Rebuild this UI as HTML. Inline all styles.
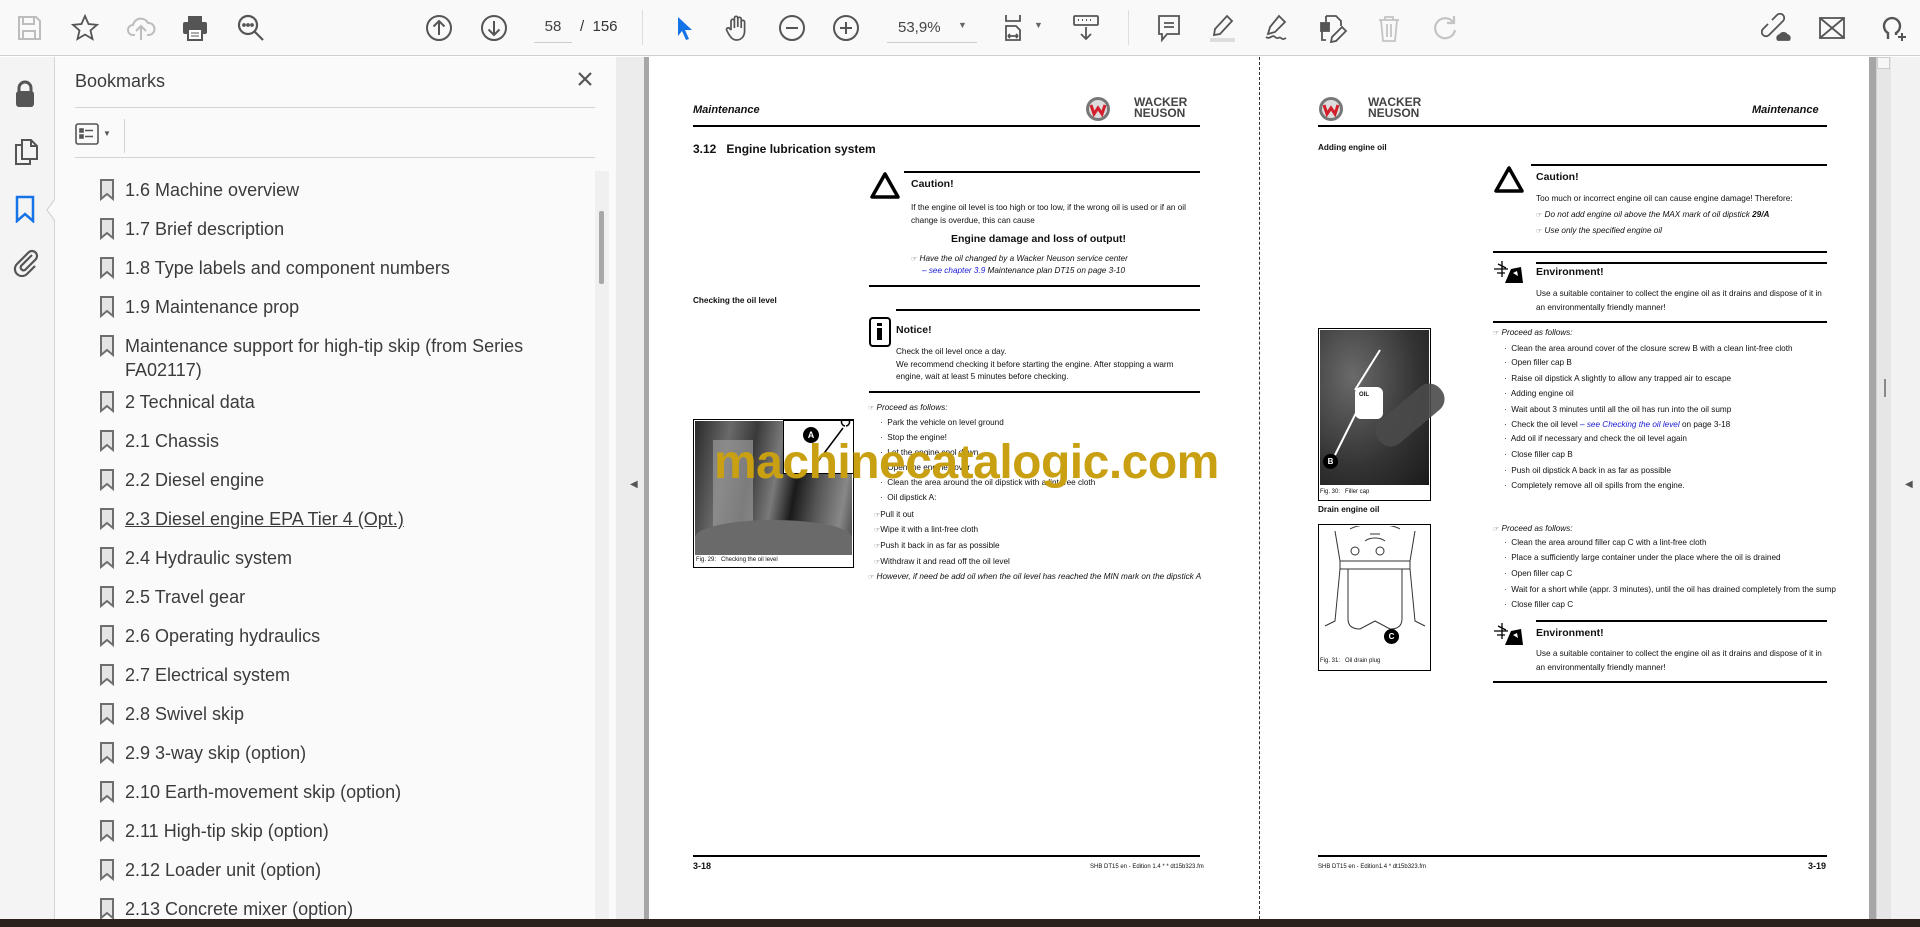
<!DOCTYPE html>
<html><head><meta charset="utf-8"><style>
*{margin:0;padding:0;box-sizing:border-box}
body{width:1920px;height:927px;overflow:hidden;position:relative;background:#fff;font-family:"Liberation Sans",sans-serif}
.a{position:absolute}
.tb{left:0;top:0;width:1920px;height:56px;background:#f9f9f9;border-bottom:1px solid #d0d0d0}
.ic{position:absolute;top:13px;width:30px;height:30px}
.rail{left:0;top:57px;width:55px;height:862px;background:#f4f4f4;border-right:1px solid #d6d6d6}
.bp{left:55px;top:57px;width:561px;height:862px;background:#fafafa}
.bm{position:absolute;left:70px;font-size:18px;color:#3b3b3b;white-space:nowrap;line-height:24px}
.bm svg{position:absolute;left:-26px;top:1px}
.pg{font-family:"Liberation Sans",sans-serif;color:#111;white-space:nowrap;position:absolute;font-size:8.2px;line-height:11px}
.rule{position:absolute;height:2px;background:#000}
.b{font-weight:bold}
.i{font-style:italic}
.hand{font-size:7px;color:#555;font-style:normal}
</style></head><body>
<!-- toolbar -->
<div class="a tb">
<svg class="ic" style="left:14px" viewBox="0 0 30 30" fill="none" stroke="#bdbdbd" stroke-width="2"><path d="M5 4h17l4 4v18H5z"/><path d="M9 4v7h11V4M9 26v-8h12v8"/></svg>
<svg class="ic" style="left:70px" viewBox="0 0 30 30" fill="none" stroke="#555" stroke-width="1.8"><path d="M15 3l3.5 8 8.5.8-6.5 5.7 2 8.5L15 21.5 7.5 26l2-8.5L3 11.8l8.5-.8z"/></svg>
<svg class="ic" style="left:126px" viewBox="0 0 30 30" fill="none" stroke="#bdbdbd" stroke-width="2"><path d="M9 22H7a5 5 0 0 1 0-10 8 8 0 0 1 15-2 6 6 0 0 1 1 12h-2M15 27V14M10 18l5-5 5 5"/></svg>
<svg class="ic" style="left:180px" viewBox="0 0 30 30"><rect x="8" y="3" width="14" height="6" fill="#555"/><rect x="3" y="9" width="24" height="12" rx="2" fill="#555"/><rect x="8" y="16" width="14" height="11" fill="#fff" stroke="#555" stroke-width="2"/><path d="M11 20h8M11 23h8" stroke="#555"/></svg>
<svg class="ic" style="left:236px" viewBox="0 0 30 30" fill="none" stroke="#555" stroke-width="2.2"><circle cx="12" cy="12" r="9"/><path d="M18.5 18.5L27 27"/><circle cx="8" cy="12" r=".8" fill="#555"/><circle cx="12" cy="12" r=".8" fill="#555"/><circle cx="16" cy="12" r=".8" fill="#555"/></svg>
<svg class="ic" style="left:424px" viewBox="0 0 30 30" fill="none" stroke="#555" stroke-width="2"><circle cx="15" cy="15" r="12"/><path d="M15 22V8M9.5 13.5L15 8l5.5 5.5"/></svg>
<svg class="ic" style="left:479px" viewBox="0 0 30 30" fill="none" stroke="#555" stroke-width="2"><circle cx="15" cy="15" r="12"/><path d="M15 8v14M9.5 16.5L15 22l5.5-5.5"/></svg>
<div class="a" style="left:534px;top:18px;width:38px;text-align:center;font-size:15px;color:#444">58</div>
<div class="a" style="left:534px;top:42px;width:38px;height:1px;background:#ccc"></div>
<div class="a" style="left:580px;top:18px;font-size:15px;color:#333">/&nbsp; 156</div>
<div class="a" style="left:642px;top:10px;width:1px;height:35px;background:#ddd"></div>
<svg class="ic" style="left:670px" viewBox="0 0 30 30"><path d="M8 4l14 13h-7l4 9-3 1-4-9-4 5z" fill="#1473e6"/></svg>
<svg class="ic" style="left:722px" viewBox="0 0 30 30" fill="none" stroke="#555" stroke-width="1.7"><path d="M9 17V8a1.7 1.7 0 0 1 3.4 0v7M12.4 14V5a1.7 1.7 0 0 1 3.4 0v9M15.8 14V6a1.7 1.7 0 0 1 3.4 0v9M19.2 15V9a1.7 1.7 0 0 1 3.4 0v9c0 5-3 9-8 9-4 0-6-3-8-6l-2-4a1.7 1.7 0 0 1 3-1.5L9 17"/></svg>
<svg class="ic" style="left:777px" viewBox="0 0 30 30" fill="none" stroke="#555" stroke-width="2"><circle cx="15" cy="15" r="12"/><path d="M9 15h12"/></svg>
<svg class="ic" style="left:831px" viewBox="0 0 30 30" fill="none" stroke="#555" stroke-width="2"><circle cx="15" cy="15" r="12"/><path d="M9 15h12M15 9v12"/></svg>
<div class="a" style="left:898px;top:19px;font-size:15px;color:#444">53,9%</div>
<div class="a" style="left:887px;top:42px;width:90px;height:1px;background:#ccc"></div>
<div class="a" style="left:958px;top:20px;font-size:9px;color:#666">▼</div>
<svg class="ic" style="left:1002px" viewBox="0 0 30 30" fill="none" stroke="#555" stroke-width="1.8"><path d="M4 2v6h14V2M4 27V13h10l4 4v10zM6 23h10M6 23l2-2M6 23l2 2M16 23l-2-2M16 23l-2 2"/></svg>
<div class="a" style="left:1034px;top:20px;font-size:9px;color:#666">▼</div>
<svg class="ic" style="left:1071px" viewBox="0 0 30 30" fill="none" stroke="#555" stroke-width="1.8"><rect x="3" y="3" width="24" height="9" rx="1"/><path d="M7 7h1M11 7h1M15 7h1M19 7h1M23 7h0" stroke-width="2"/><path d="M15 14v12M10 21l5 5 5-5"/></svg>
<div class="a" style="left:1128px;top:10px;width:1px;height:35px;background:#ddd"></div>
<svg class="ic" style="left:1154px" viewBox="0 0 30 30" fill="none" stroke="#555" stroke-width="1.8"><path d="M5 3h20v18H13l-5 6v-6H5z"/><path d="M10 10h10M10 14h10"/></svg>
<svg class="ic" style="left:1207px" viewBox="0 0 30 30" fill="none" stroke="#555" stroke-width="1.8"><path d="M20 3l5 5-12 13-6 1 1-6z"/><rect x="3" y="25" width="25" height="4" fill="#ddd" stroke="none"/></svg>
<svg class="ic" style="left:1261px" viewBox="0 0 30 30" fill="none" stroke="#555" stroke-width="1.8"><path d="M18 3l6 6-10 10-7 2 2-7zM5 24c4 3 6-3 9 0s4-1 6 1 3 1 5 0"/></svg>
<svg class="ic" style="left:1318px" viewBox="0 0 30 30" fill="none" stroke="#555" stroke-width="1.8"><path d="M8 3h10l5 5v5M8 3v6M12 11H4v16h4"/><rect x="3" y="10" width="8" height="8" fill="#555"/><path d="M24 14l4 4-10 10-5 1 1-5z"/></svg>
<svg class="ic" style="left:1374px" viewBox="0 0 30 30" fill="none" stroke="#c4c4c4" stroke-width="1.8"><path d="M5 7h20M11 7V4h8v3M7 7l2 21h12l2-21M13 11v13M17 11v13"/></svg>
<svg class="ic" style="left:1430px" viewBox="0 0 30 30" fill="none" stroke="#c4c4c4" stroke-width="2.2"><path d="M23 9a10 10 0 1 0 2 8M24 3v7h-7"/></svg>
<svg class="ic" style="left:1761px" viewBox="0 0 30 30" fill="none" stroke="#555" stroke-width="1.8"><path d="M13 17l-5 5a4 4 0 0 1-6-6l5-5M17 13l5-5a4 4 0 0 0-6-6l-5 5M11 19l8-8"/><path d="M17 27h11a3 3 0 0 0-2-5 4 4 0 0 0-7 0 3 3 0 0 0-2 5z" fill="#555"/></svg>
<svg class="ic" style="left:1817px" viewBox="0 0 30 30" fill="none" stroke="#555" stroke-width="1.8"><rect x="3" y="5" width="24" height="20"/><path d="M3 5l24 20M27 5L3 25"/></svg>
<svg class="ic" style="left:1878px" viewBox="0 0 30 30" fill="none" stroke="#555" stroke-width="2.4"><path d="M10 26v-6a8 8 0 1 1 8 0v2"/><path d="M20 24h8M24 20v8" stroke-width="2"/></svg>
</div>
<!-- left rail -->
<div class="a rail">
<svg class="a" style="left:13px;top:22px" width="24" height="30" viewBox="0 0 24 30"><path d="M6 13V9a6 6 0 0 1 12 0v4" fill="none" stroke="#555" stroke-width="3"/><rect x="3" y="12" width="18" height="16" rx="3" fill="#555"/></svg>
<svg class="a" style="left:13px;top:80px" width="26" height="30" viewBox="0 0 26 30" fill="none" stroke="#555" stroke-width="2"><path d="M9 3h9l6 6v13H9zM18 3v6h6M9 8H3v19h14v-5"/></svg>
<svg class="a" style="left:14px;top:138px" width="22" height="28" viewBox="0 0 22 28" fill="none" stroke="#1473e6" stroke-width="2.5"><path d="M3 2h16v24l-8-7-8 7z"/></svg>
<svg class="a" style="left:12px;top:190px" width="28" height="30" viewBox="0 0 28 30" fill="none" stroke="#555" stroke-width="2.2"><path d="M20 8L9 19a3 3 0 0 0 4 4l11-11a5 5 0 0 0-7-7L5 17a7 7 0 0 0 10 10l8-8"/></svg>
<svg class="a" style="left:46px;top:142px" width="10" height="22" viewBox="0 0 10 22"><path d="M9 0L1 11l8 11" fill="#fafafa" stroke="#ccc"/></svg>
</div>
<!-- bookmarks panel -->
<div class="a bp">
<div class="a" style="left:20px;top:14px;font-size:18px;color:#3b3b3b">Bookmarks</div>
<svg class="a" style="left:522px;top:14px" width="16" height="16" viewBox="0 0 16 16" stroke="#555" stroke-width="2.2"><path d="M2 2l12 12M14 2L2 14"/></svg>
<div class="a" style="left:20px;top:50px;width:520px;height:1px;background:#d4d4d4"></div>
<svg class="a" style="left:20px;top:66px" width="24" height="22" viewBox="0 0 24 22" fill="none" stroke="#555" stroke-width="1.6"><rect x="1" y="1" width="22" height="20" rx="2"/><rect x="5" y="6" width="3" height="3" fill="#555"/><rect x="5" y="12" width="3" height="3" fill="#555"/><path d="M10 7.5h8M10 13.5h8"/></svg>
<div class="a" style="left:48px;top:72px;font-size:8px;color:#555">▼</div>
<div class="a" style="left:69px;top:62px;width:1px;height:34px;background:#d4d4d4"></div>
<div class="a" style="left:20px;top:100px;width:520px;height:1px;background:#d4d4d4"></div>
<div class="a" style="left:540px;top:114px;width:14px;height:748px;background:#f0f0f0"></div>
<div class="a" style="left:544px;top:154px;width:5px;height:73px;background:#a8a8a8;border-radius:2px"></div>
<div class="bm" style="top:121px"><svg width="16" height="22" viewBox="0 0 16 22"><path d="M2 1h12v19l-6-5-6 5z" fill="#e4e4e4" stroke="#6e6e6e" stroke-width="2"/></svg>1.6 Machine overview</div>
<div class="bm" style="top:160px"><svg width="16" height="22" viewBox="0 0 16 22"><path d="M2 1h12v19l-6-5-6 5z" fill="#e4e4e4" stroke="#6e6e6e" stroke-width="2"/></svg>1.7 Brief description</div>
<div class="bm" style="top:199px"><svg width="16" height="22" viewBox="0 0 16 22"><path d="M2 1h12v19l-6-5-6 5z" fill="#e4e4e4" stroke="#6e6e6e" stroke-width="2"/></svg>1.8 Type labels and component numbers</div>
<div class="bm" style="top:238px"><svg width="16" height="22" viewBox="0 0 16 22"><path d="M2 1h12v19l-6-5-6 5z" fill="#e4e4e4" stroke="#6e6e6e" stroke-width="2"/></svg>1.9 Maintenance prop</div>
<div class="bm" style="top:277px"><svg width="16" height="22" viewBox="0 0 16 22"><path d="M2 1h12v19l-6-5-6 5z" fill="#e4e4e4" stroke="#6e6e6e" stroke-width="2"/></svg>Maintenance support for high-tip skip (from Series<br>FA02117)</div>
<div class="bm" style="top:333px"><svg width="16" height="22" viewBox="0 0 16 22"><path d="M2 1h12v19l-6-5-6 5z" fill="#e4e4e4" stroke="#6e6e6e" stroke-width="2"/></svg>2 Technical data</div>
<div class="bm" style="top:372px"><svg width="16" height="22" viewBox="0 0 16 22"><path d="M2 1h12v19l-6-5-6 5z" fill="#e4e4e4" stroke="#6e6e6e" stroke-width="2"/></svg>2.1 Chassis</div>
<div class="bm" style="top:411px"><svg width="16" height="22" viewBox="0 0 16 22"><path d="M2 1h12v19l-6-5-6 5z" fill="#e4e4e4" stroke="#6e6e6e" stroke-width="2"/></svg>2.2 Diesel engine</div>
<div class="bm" style="top:450px;text-decoration:underline"><svg width="16" height="22" viewBox="0 0 16 22"><path d="M2 1h12v19l-6-5-6 5z" fill="#e4e4e4" stroke="#6e6e6e" stroke-width="2"/></svg>2.3 Diesel engine EPA Tier 4 (Opt.)</div>
<div class="bm" style="top:489px"><svg width="16" height="22" viewBox="0 0 16 22"><path d="M2 1h12v19l-6-5-6 5z" fill="#e4e4e4" stroke="#6e6e6e" stroke-width="2"/></svg>2.4 Hydraulic system</div>
<div class="bm" style="top:528px"><svg width="16" height="22" viewBox="0 0 16 22"><path d="M2 1h12v19l-6-5-6 5z" fill="#e4e4e4" stroke="#6e6e6e" stroke-width="2"/></svg>2.5 Travel gear</div>
<div class="bm" style="top:567px"><svg width="16" height="22" viewBox="0 0 16 22"><path d="M2 1h12v19l-6-5-6 5z" fill="#e4e4e4" stroke="#6e6e6e" stroke-width="2"/></svg>2.6 Operating hydraulics</div>
<div class="bm" style="top:606px"><svg width="16" height="22" viewBox="0 0 16 22"><path d="M2 1h12v19l-6-5-6 5z" fill="#e4e4e4" stroke="#6e6e6e" stroke-width="2"/></svg>2.7 Electrical system</div>
<div class="bm" style="top:645px"><svg width="16" height="22" viewBox="0 0 16 22"><path d="M2 1h12v19l-6-5-6 5z" fill="#e4e4e4" stroke="#6e6e6e" stroke-width="2"/></svg>2.8 Swivel skip</div>
<div class="bm" style="top:684px"><svg width="16" height="22" viewBox="0 0 16 22"><path d="M2 1h12v19l-6-5-6 5z" fill="#e4e4e4" stroke="#6e6e6e" stroke-width="2"/></svg>2.9 3-way skip (option)</div>
<div class="bm" style="top:723px"><svg width="16" height="22" viewBox="0 0 16 22"><path d="M2 1h12v19l-6-5-6 5z" fill="#e4e4e4" stroke="#6e6e6e" stroke-width="2"/></svg>2.10 Earth-movement skip (option)</div>
<div class="bm" style="top:762px"><svg width="16" height="22" viewBox="0 0 16 22"><path d="M2 1h12v19l-6-5-6 5z" fill="#e4e4e4" stroke="#6e6e6e" stroke-width="2"/></svg>2.11 High-tip skip (option)</div>
<div class="bm" style="top:801px"><svg width="16" height="22" viewBox="0 0 16 22"><path d="M2 1h12v19l-6-5-6 5z" fill="#e4e4e4" stroke="#6e6e6e" stroke-width="2"/></svg>2.12 Loader unit (option)</div>
<div class="bm" style="top:840px"><svg width="16" height="22" viewBox="0 0 16 22"><path d="M2 1h12v19l-6-5-6 5z" fill="#e4e4e4" stroke="#6e6e6e" stroke-width="2"/></svg>2.13 Concrete mixer (option)</div>
</div>
<!-- splitter -->
<div class="a" style="left:616px;top:57px;width:28px;height:862px;background:#ececec"></div>
<div class="a" style="left:630px;top:479px;font-size:10px;color:#555">◀</div>
<div class="a" style="left:644px;top:57px;width:5px;height:862px;background:#a6a6a6"></div>
<!-- right scroll -->
<div class="a" style="left:1869px;top:57px;width:7px;height:862px;background:#a6a6a6"></div>
<div class="a" style="left:1876px;top:57px;width:44px;height:862px;background:#f2f2f2"></div>
<div class="a" style="left:1876px;top:57px;width:15px;height:862px;background:#e6e6e6;border-left:1px solid #d0d0d0"></div>
<div class="a" style="left:1877px;top:57px;width:13px;height:12px;background:#f6f6f6;border:1px solid #ccc"></div>
<div class="a" style="left:1884px;top:379px;width:2px;height:18px;background:#888"></div>
<div class="a" style="left:1905px;top:479px;font-size:10px;color:#555">◀</div>
<!-- dashed divider -->
<div class="a" style="left:1259px;top:57px;width:0;height:862px;border-left:1px dashed #333"></div>
<!-- bottom bar -->
<div class="a" style="left:0;top:919px;width:1920px;height:8px;background:#2b211d"></div>

<!-- PAGE 1 -->
<div class="pg b i" style="left:693px;top:105px;font-size:11px">Maintenance</div>
<svg class="a" style="left:1085px;top:96px" width="26" height="26" viewBox="0 0 26 26"><circle cx="13" cy="13" r="12" fill="#777"/><circle cx="13" cy="13" r="9" fill="#ddd"/><path d="M6 9l3 9 4-6 4 6 3-9" fill="none" stroke="#d21f2b" stroke-width="3"/></svg>
<div class="pg b" style="left:1134px;top:97px;font-size:12px;line-height:11px;color:#444">WACKER<br>NEUSON</div>
<div class="rule" style="left:693px;top:125px;width:507px;height:1.5px"></div>
<div class="pg b" style="left:693px;top:142px;font-size:12px;line-height:14px">3.12&nbsp;&nbsp;&nbsp;Engine lubrication system</div>
<svg class="a" style="left:869px;top:171px" width="32" height="29" viewBox="0 0 32 29"><path d="M16 3L3 26h26z" fill="none" stroke="#000" stroke-width="3.5" stroke-linejoin="round"/></svg>
<div class="rule" style="left:904px;top:171px;width:296px;height:1.5px"></div>
<div class="pg b" style="left:911px;top:179px;font-size:10.5px">Caution!</div>
<div class="pg" style="left:911px;top:202px">If the engine oil level is too high or too low, if the wrong oil is used or if an oil</div>
<div class="pg" style="left:911px;top:215px">change is overdue, this can cause</div>
<div class="pg b" style="left:951px;top:233px;font-size:10.5px;line-height:13px">Engine damage and loss of output!</div>
<div class="pg i" style="left:911px;top:253px"><span class="hand">☞</span> Have the oil changed by a Wacker Neuson service center</div>
<div class="pg i" style="left:922px;top:265px"><span style="color:#1a1ad6">– see chapter 3.9</span> Maintenance plan DT15 on page 3-10</div>
<div class="rule" style="left:869px;top:285px;width:331px;height:1.5px"></div>
<div class="pg b" style="left:693px;top:295px">Checking the oil level</div>
<div class="a" style="left:869px;top:317px;width:22px;height:30px;border:2px solid #000;border-radius:4px"></div>
<div class="a" style="left:877px;top:323px;width:5px;height:3px;background:#000"></div>
<div class="a" style="left:877px;top:328px;width:5px;height:12px;background:#000"></div>
<div class="rule" style="left:896px;top:309px;width:304px;height:1.5px"></div>
<div class="pg b" style="left:896px;top:325px;font-size:10.5px">Notice!</div>
<div class="pg" style="left:896px;top:346px">Check the oil level once a day.</div>
<div class="pg" style="left:896px;top:359px">We recommend checking it before starting the engine. After stopping a warm</div>
<div class="pg" style="left:896px;top:371px">engine, wait at least 5 minutes before checking.</div>
<div class="rule" style="left:869px;top:391px;width:331px;height:1.5px"></div>
<div class="pg i" style="left:868px;top:402px"><span class="hand">☞</span> Proceed as follows:</div>
<div class="pg" style="left:880px;top:417px">·&nbsp; Park the vehicle on level ground</div>
<div class="pg" style="left:880px;top:432px">·&nbsp; Stop the engine!</div>
<div class="pg" style="left:880px;top:447px">·&nbsp; Let the engine cool down</div>
<div class="pg" style="left:880px;top:462px">·&nbsp; Open the engine cover</div>
<div class="pg" style="left:880px;top:477px">·&nbsp; Clean the area around the oil dipstick with a lint-free cloth</div>
<div class="pg" style="left:880px;top:492px">·&nbsp; Oil dipstick A:</div>
<div class="pg" style="left:874px;top:509px"><span class="hand">☞</span>Pull it out</div>
<div class="pg" style="left:874px;top:524px"><span class="hand">☞</span>Wipe it with a lint-free cloth</div>
<div class="pg" style="left:874px;top:540px"><span class="hand">☞</span>Push it back in as far as possible</div>
<div class="pg" style="left:874px;top:556px"><span class="hand">☞</span>Withdraw it and read off the oil level</div>
<div class="pg i" style="left:868px;top:571px"><span class="hand">☞</span> However, if need be add oil when the oil level has reached the MIN mark on the dipstick A</div>
<!-- fig 29 -->
<div class="a" style="left:693px;top:419px;width:161px;height:149px;border:1.5px solid #000;background:#fff"></div>
<div class="a" style="left:695px;top:421px;width:157px;height:134px;background:linear-gradient(100deg,#2a2a2a 0%,#6a6a6a 20%,#3a3a3a 35%,#7a7a7a 50%,#1a1a1a 62%,#555 75%,#888 90%,#444 100%)"></div>
<div class="a" style="left:713px;top:440px;width:40px;height:90px;background:#999;opacity:.7"></div>
<div class="a" style="left:695px;top:520px;width:157px;height:35px;background:#6a6a6a;border-radius:50% 50% 0 0"></div>
<div class="a" style="left:783px;top:420px;width:71px;height:54px;background:#fff;border:1.5px solid #000"></div>
<div class="a" style="left:803px;top:427px;width:16px;height:16px;border-radius:50%;background:#000;color:#fff;font-size:9px;font-weight:bold;text-align:center;line-height:16px">A</div>
<svg class="a" style="left:783px;top:420px" width="71" height="54"><path d="M60 8l-30 40M62 6a4 4 0 1 1 1 0" stroke="#000" stroke-width="1.5" fill="none"/></svg>
<div class="pg" style="left:696px;top:556px;font-size:6px;line-height:8px">Fig. 29:&nbsp;&nbsp; Checking the oil level</div>
<!-- footer p1 -->
<div class="rule" style="left:693px;top:855px;width:507px;height:1.5px"></div>
<div class="pg b" style="left:693px;top:861px;font-size:9px">3-18</div>
<div class="pg" style="left:1090px;top:862px;font-size:6px">SHB DT15 en - Edition 1.4 * * dt15b323.fm</div>

<!-- PAGE 2 -->
<svg class="a" style="left:1318px;top:96px" width="26" height="26" viewBox="0 0 26 26"><circle cx="13" cy="13" r="12" fill="#777"/><circle cx="13" cy="13" r="9" fill="#ddd"/><path d="M6 9l3 9 4-6 4 6 3-9" fill="none" stroke="#d21f2b" stroke-width="3"/></svg>
<div class="pg b" style="left:1368px;top:97px;font-size:12px;line-height:11px;color:#444">WACKER<br>NEUSON</div>
<div class="pg b i" style="left:1752px;top:105px;font-size:11px">Maintenance</div>
<div class="rule" style="left:1318px;top:125px;width:509px;height:1.5px"></div>
<div class="pg b" style="left:1318px;top:142px">Adding engine oil</div>
<svg class="a" style="left:1493px;top:165px" width="32" height="29" viewBox="0 0 32 29"><path d="M16 3L3 26h26z" fill="none" stroke="#000" stroke-width="3.5" stroke-linejoin="round"/></svg>
<div class="rule" style="left:1531px;top:164px;width:296px;height:1.5px"></div>
<div class="pg b" style="left:1536px;top:172px;font-size:10.5px">Caution!</div>
<div class="pg" style="left:1536px;top:193px">Too much or incorrect engine oil can cause engine damage! Therefore:</div>
<div class="pg i" style="left:1536px;top:209px"><span class="hand">☞</span> Do not add engine oil above the MAX mark of oil dipstick <b>29/A</b></div>
<div class="pg i" style="left:1536px;top:225px"><span class="hand">☞</span> Use only the specified engine oil</div>
<div class="rule" style="left:1493px;top:251px;width:334px;height:1.5px"></div>
<svg class="a" style="left:1493px;top:259px" width="32" height="26" viewBox="0 0 32 26"><path d="M1 10h14M9 2v16M5 5l8 4M4 14h8" stroke="#000" stroke-width="1.3"/><path d="M12 24l6-14 10-2 2 16z" fill="#000"/><path d="M20 14l4-2 1 5z" fill="#fff"/></svg>
<div class="rule" style="left:1536px;top:262px;width:291px;height:1.5px"></div>
<div class="pg b" style="left:1536px;top:267px;font-size:10.5px">Environment!</div>
<div class="pg" style="left:1536px;top:288px">Use a suitable container to collect the engine oil as it drains and dispose of it in</div>
<div class="pg" style="left:1536px;top:302px">an environmentally friendly manner!</div>
<div class="rule" style="left:1493px;top:321px;width:334px;height:1.5px"></div>
<!-- fig 30 -->
<div class="a" style="left:1318px;top:328px;width:113px;height:173px;border:1.5px solid #000;background:#fff"></div>
<div class="a" style="left:1320px;top:330px;width:109px;height:155px;background:radial-gradient(ellipse at 30% 30%,#6a6a6a,#333 60%,#1a1a1a)"></div>
<div class="a" style="left:1370px;top:400px;width:80px;height:30px;background:#4a4a4a;transform:rotate(-40deg);border-radius:14px;opacity:.9"></div>
<div class="a" style="left:1355px;top:387px;width:28px;height:32px;background:#fff;border-radius:6px"></div>
<div class="pg b" style="left:1359px;top:390px;font-size:6px">OIL</div>
<svg class="a" style="left:1320px;top:330px" width="109" height="155"><path d="M60 20L35 60M40 75L15 125" stroke="#fff" stroke-width="2"/></svg>
<div class="a" style="left:1323px;top:454px;width:15px;height:15px;border-radius:50%;background:#000;color:#fff;font-size:8px;font-weight:bold;text-align:center;line-height:15px">B</div>
<div class="pg" style="left:1320px;top:488px;font-size:6px;line-height:8px">Fig. 30:&nbsp;&nbsp; Filler cap</div>
<div class="pg i" style="left:1493px;top:327px"><span class="hand">☞</span> Proceed as follows:</div>
<div class="pg" style="left:1504px;top:343px">·&nbsp; Clean the area around cover of the closure screw B with a clean lint-free cloth</div>
<div class="pg" style="left:1504px;top:357px">·&nbsp; Open filler cap B</div>
<div class="pg" style="left:1504px;top:373px">·&nbsp; Raise oil dipstick A slightly to allow any trapped air to escape</div>
<div class="pg" style="left:1504px;top:388px">·&nbsp; Adding engine oil</div>
<div class="pg" style="left:1504px;top:404px">·&nbsp; Wait about 3 minutes until all the oil has run into the oil sump</div>
<div class="pg" style="left:1504px;top:419px">·&nbsp; Check the oil level <span class="i" style="color:#1a1ad6">– see Checking the oil level</span> on page 3-18</div>
<div class="pg" style="left:1504px;top:433px">·&nbsp; Add oil if necessary and check the oil level again</div>
<div class="pg" style="left:1504px;top:449px">·&nbsp; Close filler cap B</div>
<div class="pg" style="left:1504px;top:465px">·&nbsp; Push oil dipstick A back in as far as possible</div>
<div class="pg" style="left:1504px;top:480px">·&nbsp; Completely remove all oil spills from the engine.</div>
<div class="pg b" style="left:1318px;top:504px">Drain engine oil</div>
<!-- fig 31 -->
<div class="a" style="left:1318px;top:524px;width:113px;height:147px;border:1.5px solid #000;background:#fff"></div>
<svg class="a" style="left:1320px;top:526px" width="109" height="130" viewBox="0 0 109 130" fill="none" stroke="#333" stroke-width="1"><path d="M15 5l5 30 10 0M95 5l-5 30-10 0M30 3c10-6 40-6 50 0M20 35h70v8H20zM28 43v50c0 8 6 10 12 10l15-8 15 8c6 0 12-2 12-10V43M20 43L15 95 5 100M90 43l5 52 10 5M50 8h10M45 15c5-4 15-4 20 0"/><circle cx="35" cy="25" r="4"/><circle cx="60" cy="25" r="4"/></svg>
<div class="a" style="left:1384px;top:629px;width:15px;height:15px;border-radius:50%;background:#000;color:#fff;font-size:8px;font-weight:bold;text-align:center;line-height:15px">C</div>
<div class="pg" style="left:1320px;top:657px;font-size:6px;line-height:8px">Fig. 31:&nbsp;&nbsp; Oil drain plug</div>
<div class="pg i" style="left:1493px;top:523px"><span class="hand">☞</span> Proceed as follows:</div>
<div class="pg" style="left:1504px;top:537px">·&nbsp; Clean the area around filler cap C with a lint-free cloth</div>
<div class="pg" style="left:1504px;top:552px">·&nbsp; Place a sufficiently large container under the place where the oil is drained</div>
<div class="pg" style="left:1504px;top:568px">·&nbsp; Open filler cap C</div>
<div class="pg" style="left:1504px;top:584px">·&nbsp; Wait for a short while (appr. 3 minutes), until the oil has drained completely from the sump</div>
<div class="pg" style="left:1504px;top:599px">·&nbsp; Close filler cap C</div>
<svg class="a" style="left:1493px;top:621px" width="32" height="26" viewBox="0 0 32 26"><path d="M1 10h14M9 2v16M5 5l8 4M4 14h8" stroke="#000" stroke-width="1.3"/><path d="M12 24l6-14 10-2 2 16z" fill="#000"/><path d="M20 14l4-2 1 5z" fill="#fff"/></svg>
<div class="rule" style="left:1536px;top:620px;width:291px;height:1.5px"></div>
<div class="pg b" style="left:1536px;top:628px;font-size:10.5px">Environment!</div>
<div class="pg" style="left:1536px;top:648px">Use a suitable container to collect the engine oil as it drains and dispose of it in</div>
<div class="pg" style="left:1536px;top:662px">an environmentally friendly manner!</div>
<div class="rule" style="left:1493px;top:681px;width:334px;height:1.5px"></div>
<!-- footer p2 -->
<div class="rule" style="left:1318px;top:855px;width:509px;height:1.5px"></div>
<div class="pg" style="left:1318px;top:862px;font-size:6px">SHB DT15 en - Edition1.4 * dt15b323.fm</div>
<div class="pg b" style="left:1808px;top:861px;font-size:9px">3-19</div>

<!-- watermark -->
<div class="a" style="left:714px;top:435px;font-size:48px;font-weight:bold;color:#c9a012;letter-spacing:-0.5px;white-space:nowrap;line-height:56px">machinecatalogic.com</div>
</body></html>
